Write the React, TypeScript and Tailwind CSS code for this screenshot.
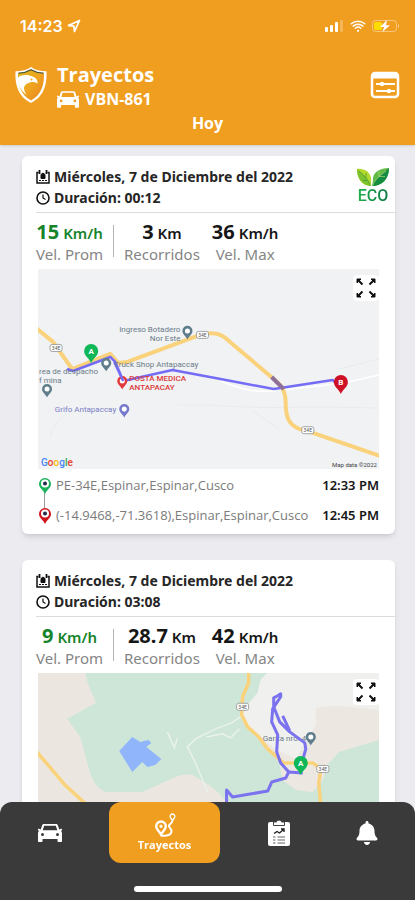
import type { ReactNode } from "react";
import { IoWifi } from "react-icons/io5";
import { FaBell } from "react-icons/fa";

function CarIcon({ className }: { className: string }) {
  return (
    <svg viewBox="0 0 24 18" className={className} fill="currentColor" aria-hidden="true">
      <path
        fillRule="evenodd"
        d="M6 0h12c1 0 1.500.4 1.800 1.200L21.300 5.600 23 4.800c.8-.2 1 .3 1 .9s-.4 1-1.300 1.100c.9.8 1.300 1.500 1.300 2.700V17c0 .6-.4 1-1 1h-2.500c-.6 0-1-.4-1-1v-2h-15v2c0 .6-.4 1-1 1H1c-.6 0-1-.4-1-1V9.500C0 8.300.4 7.600 1.300 6.800.4 6.700 0 6.300 0 5.700s.2-1.100 1-.9l1.700.8L4.200 1.200C4.500.4 5 0 6 0Zm.2 1.700L4.700 6.300h14.600l-1.500-4.600ZM4.500 9a1.500 1.500 0 1 0 0 3 1.500 1.500 0 0 0 0-3Zm15 0a1.500 1.500 0 1 0 0 3 1.500 1.500 0 0 0 0-3Z"
      />
    </svg>
  );
}

function Shield() {
  return (
    <svg viewBox="0 0 34 38" className="-mt-1 h-[38px] w-[34px] shrink-0" aria-hidden="true">
      <defs>
        <linearGradient id="shield" x1="0" y1="0" x2="1" y2="1">
          <stop offset="0" stopColor="#d9b51c" />
          <stop offset="0.5" stopColor="#f0a51f" />
          <stop offset="1" stopColor="#e8821e" />
        </linearGradient>
      </defs>
      <path d="M17 1c4 3 9 4 15.500 4.300C33 17 31 30 17 37 3 30 1 17 1.500 5.300 8 5 13 4 17 1Z" fill="#fff" />
      <path d="M17 3.500c4 2.500 8 3.400 13 3.800C30.300 18 28 28.500 17 34.500 6 28.500 3.700 18 4 7.300c5-.4 9-1.300 13-3.800Z" fill="url(#shield)" />
      <path d="M4.500 7.200C9 7 13 6 17 3.700c4 2.300 8 3.300 12.500 3.500" fill="none" stroke="#4a5236" strokeWidth="1.200" />
      <path d="M3.500 12c2-2.500 7-3.500 12-2.500 4.500.8 8.500 3.500 8 8-2-1.700-4.500-2-7-1.200-3.500 1-6.500 3-6.500 6 0 2 1 4 2.500 6.500C7 25 4 19 3.500 12Z" fill="#fff" />
      <circle cx="17.500" cy="13.500" r="1" fill="#f0a11f" />
    </svg>
  );
}

function StatusBar() {
  return (
    <div className="flex h-4 items-center justify-between pl-5 pr-[15px]">
      <div className="flex items-center gap-1 font-['Inter','Liberation_Sans',sans-serif] text-base font-semibold leading-4">
        <span>14:23</span>
        <svg viewBox="0 0 14 14" className="h-[14px] w-[14px]" fill="none" stroke="currentColor" strokeWidth="1.800" strokeLinejoin="round" aria-hidden="true">
          <path d="M12.500 1.500 1.500 6.500l5.400.6.600 5.400Z" />
        </svg>
      </div>
      <div className="flex items-center gap-[5px]">
        <svg viewBox="0 0 19 12" className="h-3 w-[19px]" fill="currentColor" aria-hidden="true">
          <rect x="0" y="7" width="3" height="5" rx="1" />
          <rect x="5" y="5" width="3" height="7" rx="1" />
          <rect x="10" y="2" width="3" height="10" rx="1" />
          <rect x="15" y="0" width="3" height="12" rx="1" opacity="0.250" />
        </svg>
        <IoWifi className="h-[18px] w-[18px]" aria-hidden="true" />
        <svg viewBox="0 0 28 14" className="h-[14px] w-7" aria-hidden="true">
          <rect x="0.500" y="1.500" width="24" height="11" rx="3" fill="none" stroke="#fff" strokeOpacity="0.400" />
          <rect x="2" y="3" width="8" height="8" rx="1.500" fill="#ffdc00" />
          <path d="M26 5c1.500.5 1.500 3.500 0 4Z" fill="#fff" opacity="0.500" />
          <path d="M15 1 8 8h4l-1.500 5L18 6.200h-4Z" fill="#fff" />
        </svg>
      </div>
    </div>
  );
}

function Header() {
  return (
    <header className="relative z-10 bg-[#f09e20] pb-2.5 pt-[18px] text-white shadow-sm">
      <StatusBar />
      <div className="mt-[29px] flex items-center pl-3.5 pr-[15px]">
        <Shield />
        <div className="ml-[9px] flex-1">
          <h1 className="text-xl font-bold leading-6">Trayectos</h1>
          <div className="flex items-center gap-1.5 text-base font-bold leading-6">
            <CarIcon className="h-[17px] w-[22px]" />
            <span>VBN-861</span>
          </div>
        </div>
        <button aria-label="Filtros" className="-mt-1 text-white">
          <svg viewBox="0 0 30 28" className="h-7 w-[30px]" fill="none" stroke="currentColor" aria-hidden="true">
            <rect x="2" y="2" width="26" height="24" rx="3" strokeWidth="2.500" />
            <path d="M2 5h26" strokeWidth="5" />
            <path d="M6 13h19M6 20h19" strokeWidth="1.800" />
            <circle cx="12" cy="13" r="2.200" fill="currentColor" stroke="none" />
            <circle cx="19" cy="20" r="2.200" fill="currentColor" stroke="none" />
          </svg>
        </button>
      </div>
      <p className="text-center text-base font-bold leading-6">Hoy</p>
    </header>
  );
}

function CalendarIcon() {
  return (
    <svg viewBox="0 0 14 14" className="h-[14px] w-[14px]" fill="none" stroke="#111" aria-hidden="true">
      <path d="M2.500 2.500H1V13h12V2.500h-1.500" strokeWidth="1.500" />
      <path d="M3.500 0v4M10.500 0v4" strokeWidth="1.800" />
      <path d="M5 4.500 7 3l2 1.500v4H5Z" fill="#111" strokeWidth="1" />
      <path d="M3 10.500h8" strokeWidth="1.200" strokeDasharray="2 1" />
    </svg>
  );
}

function ClockIcon() {
  return (
    <svg viewBox="0 0 14 14" className="h-[14px] w-[14px]" fill="none" stroke="#111" aria-hidden="true">
      <circle cx="7" cy="7" r="6" strokeWidth="1.600" />
      <path d="M7 3.500V7l2.500 1.500" strokeWidth="1.200" />
    </svg>
  );
}

function EcoBadge() {
  return (
    <div className="flex flex-col items-center gap-px pt-0.5">
      <svg viewBox="0 0 32 19" className="h-[19px] w-8" aria-hidden="true">
        <path d="M0 1c7-1 13 3 14 9 .4 3 0 6-.4 8C6 18 0 12 0 1Z" fill="#b2d92c" />
        <path d="M0 1c0 9 5 16 13.600 17C12 11 6 6 0 1Z" fill="#7fc22f" />
        <path d="M32 0C23 0 16 4 16 11c0 3-.7 5-1 7C25 18 32 11 32 0Z" fill="#63bb47" />
        <path d="M32 0C27 5 19 9 15 18c10 0 17-7 17-18Z" fill="#168c43" />
        <path d="M2 3c4 4 9 8 11.600 15M9 5v5M6 12.500h4" fill="none" stroke="#3f9a2f" strokeWidth="0.700" />
        <path d="M29 3c-5 4-11 8-13.500 15M22 3.500V8.500h6" fill="none" stroke="#c4e27a" strokeWidth="0.600" />
      </svg>
      <span className="bg-gradient-to-r from-[#1fae4b] to-[#0b7a45] bg-clip-text font-['Roboto',sans-serif] text-base font-medium leading-4 text-transparent">ECO</span>
    </div>
  );
}

function MapPin({ x, y, color, r = 5, label }: { x: number; y: number; color: string; r?: number; label?: string }) {
  return (
    <g transform={`translate(${x} ${y})`}>
      <path
        d={`M${-r} 0a${r} ${r} 0 1 1 ${2 * r} 0C${r} ${r * 0.7} ${r * 0.3} ${r} 0 ${r * 1.7}C${-r * 0.3} ${r} ${-r} ${r * 0.7} ${-r} 0Z`}
        fill={color}
      />
      {label ? (
        <text y="3" textAnchor="middle" fontSize="8" fontWeight="700" fill="#fff">{label}</text>
      ) : (
        <circle r={r * 0.5} fill="#fff" />
      )}
    </g>
  );
}

function RoadSign({ x, y }: { x: number; y: number }) {
  return (
    <g transform={`translate(${x} ${y})`}>
      <rect x="-6" y="-3.500" width="12" height="7" rx="2" fill="#fff" stroke="#8d9093" strokeWidth="0.800" />
      <text y="2" textAnchor="middle" fontSize="5" fill="#555">34E</text>
    </g>
  );
}

const mapClass = "block h-[200px] w-full font-['Roboto',sans-serif]";

function MapAntapaccay() {
  return (
    <svg viewBox="0 0 340 200" preserveAspectRatio="xMidYMid slice" className={mapClass} role="img" aria-label="Mapa del trayecto">
      <rect x="-200" width="740" height="200" fill="#f0f2f4" />
      <g fill="none" stroke="#fff" strokeWidth="1.500">
        <path d="M182 112c20 8 35 12 55 10M245 121l60-7 35-8" />
        <path d="M12 168c4-14 10-20 20-25M140 136h30c60 5 110 0 170 3M215 142l25 18M300 100l40-10" stroke="#e9ebed" strokeWidth="1" />
      </g>
      <g fill="none" strokeLinejoin="round">
        <path
          d="M-2 59 15 73l19 27 38-15 8 9 9-1 70-26c7-3 18-4 25 0 5 3 8 7 11 9l40 34c8 6 12 12 12 25 0 14 4 21 14 25l8 2 73 25"
          stroke="#fad27b"
          strokeWidth="4"
        />
        <path d="m29 100 6 2 37-14 5 5 8 19 49-11 48 9 53 10 59-9 8 8" stroke="#756cf5" strokeWidth="2.500" />
        <path d="m233 108 12 12" stroke="#8d719b" strokeWidth="4" />
      </g>
      <RoadSign x={18} y={79} />
      <RoadSign x={164} y={66} />
      <RoadSign x={269} y={161} />
      <MapPin x={149} y={62} color="#607d8b" />
      <MapPin x={68} y={94} color="#607d8b" />
      <MapPin x={9} y={120} color="#607d8b" />
      <MapPin x={86} y={140} color="#7579ca" />
      <MapPin x={84} y={112} color="#e33b3b" />
      <path d="m76 93 9 19" stroke="#756cf5" strokeWidth="2.500" />
      <g fontSize="8" fill="#6b7b87">
        <text x="142" y="63" textAnchor="end">Ingreso Botadero</text>
        <text x="142" y="72" textAnchor="end">Nor Este</text>
        <text x="76" y="98">Truck Shop Antapaccay</text>
        <text x="1" y="105">rea de despacho</text>
        <text x="1" y="114">f mina</text>
        <text x="78" y="143" textAnchor="end" fill="#7b80c4">Grifo Antapaccay</text>
        <g fill="#dd3b3b" fontWeight="500">
          <text x="91" y="112">POSTA MEDICA</text>
          <text x="91" y="121">ANTAPACAY</text>
        </g>
      </g>
      <MapPin x={53} y={82} r={7} color="#10b759" label="A" />
      <MapPin x={302} y={113} r={7} color="#ce1126" label="B" />
      <text x="3" y="197" fontSize="10" fontWeight="500" fill="#4285f4">
        G<tspan fill="#ea4335">o</tspan><tspan fill="#fbbc05">o</tspan>g<tspan fill="#34a853">l</tspan><tspan fill="#ea4335">e</tspan>
      </text>
      <text x="338" y="198" textAnchor="end" fontSize="6" fill="#444">Map data ©2022</text>
    </svg>
  );
}

function MapMine() {
  return (
    <svg viewBox="0 0 340 200" preserveAspectRatio="xMidYMid slice" className={mapClass} role="img" aria-label="Mapa del trayecto">
      <rect x="-200" width="740" height="200" fill="#cee6d8" />
      <path d="M-200 0H47l3 12 8 18-29 16 13 18 10 36q4 14 15 19h37l33-15q9-4 17-2l18 11q8 6 14 14l10 20v53H-200Z" fill="#ebe7e0" />
      <path d="M229 0 222 7l-3 13-15 18 1 12 15 14 20 23 4 20 13 10 17 2 10-12 6-17 10-11 40-12h200V0Z" fill="#ece8e1" />
      <path d="M229 0 222 7l-3 13-15 18 1 12 29 24 23 12 20-34v-17l20-2 43 4h200V0Z" fill="#f0f0ee" />
      <path d="m81 78 13-14 8 5 8-2 3 3-5 4 15 12-6 6-8 2-5-5-10 10Z" fill="#90b5fb" />
      <path d="m205 42-12 8-16 6-20 10-8 8 8 16 12 29M129 59l7 16 3-10M168 64l16-3 8 4 9-9" fill="none" stroke="#e9f2ec" strokeWidth="1.500" />
      <g fill="none" stroke="#fad27b" strokeWidth="3.500" strokeLinejoin="round">
        <path d="m-2 78 29 34 24 22" />
        <path d="M210-2v12l-6 14-1 18 6 12 11 10 9 12 16 14h29l8 6-2 14 2 24" />
      </g>
      <RoadSign x={204} y={34} />
      <RoadSign x={284} y={96} />
      <text x="224" y="68" fontSize="8" fill="#6b7b87">Garita nro. 4</text>
      <g fill="none" stroke="#7a72ee" strokeWidth="3" strokeLinejoin="round">
        <path d="M188 135v-18l6 7 35-6 4-9 14-4 3-6 14 1" />
        <path d="m250 99-8-9-4-11 1-17-6-13 1-13 8-12v-3l-3 2-4 2v9l6 15 10 10 15 11 1 6-3 11M244 43l7 15" />
      </g>
      <MapPin x={272} y={64} color="#607d8b" />
      <MapPin x={262} y={90} r={7} color="#10b759" label="A" />
    </svg>
  );
}

function ExpandButton() {
  return (
    <button aria-label="Ampliar mapa" className="absolute right-0 top-1.5 rounded-sm bg-white p-0.5">
      <svg viewBox="0 0 22 22" className="h-[22px] w-[22px]" aria-hidden="true">
        <g fill="#111" stroke="#111" strokeWidth="2">
          <path d="M2 2h4L2 6ZM20 2h-4l4 4ZM2 20h4l-4-4ZM20 20h-4l4-4Z" strokeWidth="1" />
          <path d="m3 3 4.500 4.500M19 3l-4.500 4.500M3 19l4.500-4.500M19 19l-4.500-4.500" />
        </g>
      </svg>
    </button>
  );
}

function Stat({ value, unit, label, green = false }: { value: string; unit: string; label: string; green?: boolean }) {
  return (
    <div>
      <div className={green ? "flex items-baseline justify-center gap-1 text-[#16842b]" : "flex items-baseline justify-center gap-1 text-[#161616]"}>
        <span className="text-xl font-bold leading-[26px]">{value}</span>
        <span className="text-[15px] font-semibold leading-5">{unit}</span>
      </div>
      <div className="text-center text-[15px] leading-[18px] text-[#858585]">{label}</div>
    </div>
  );
}

function StopPin({ color }: { color: string }) {
  return (
    <svg viewBox="0 0 14 18" className="relative h-[18px] w-[14px] shrink-0" aria-hidden="true">
      <path d="M7 1a6 6 0 0 0-6 6c0 4 4 5.500 6 10 2-4.500 6-6 6-10a6 6 0 0 0-6-6Z" fill={color} />
      <circle cx="7" cy="6.500" r="4" fill="#fff" />
      <circle cx="7" cy="6.500" r="2" fill="#222c44" />
    </svg>
  );
}

function Stop({ color, place, time }: { color: string; place: string; time: string }) {
  return (
    <li className="flex h-[30px] items-center text-[13px]">
      <StopPin color={color} />
      <span className="ml-1 flex-1 whitespace-nowrap font-['Open_Sans','Noto_Sans',sans-serif] text-[#7b7b7b]">{place}</span>
      <time className="whitespace-nowrap font-semibold text-[#161616]">{time}</time>
    </li>
  );
}

interface TripProps {
  duration: string;
  avg: string;
  distance: string;
  max: string;
  eco?: boolean;
  map: ReactNode;
  children?: ReactNode;
}

function TripCard({ duration, avg, distance, max, eco, map, children }: TripProps) {
  return (
    <article className="rounded-md bg-white pb-[3px] font-['Noto_Sans','Open_Sans',sans-serif] shadow-md">
      <div className="ml-3.5 flex justify-between border-b border-[#dcdcdc] pb-1 pr-1.5 pt-2.5">
        <div className="text-sm font-bold leading-[21px] text-[#262626]">
          <h2 className="flex items-center gap-1"><CalendarIcon />Miércoles, 7 de Diciembre del 2022</h2>
          <p className="flex items-center gap-1"><ClockIcon />Duración: {duration}</p>
        </div>
        {eco && <EcoBadge />}
      </div>
      <div className="flex items-center pb-1.5 pl-3.5 pt-1.5">
        <Stat value={avg} unit="Km/h" label="Vel. Prom" green />
        <div className="mx-2.5 h-8 w-px bg-[#b5b5b5]" />
        <Stat value={distance} unit="Km" label="Recorridos" />
        <div className="ml-3">
          <Stat value={max} unit="Km/h" label="Vel. Max" />
        </div>
      </div>
      <div className="relative mx-4 overflow-hidden">
        {map}
        <ExpandButton />
      </div>
      {children}
    </article>
  );
}

function RouteIcon() {
  return (
    <svg viewBox="0 0 22 24" className="h-6 w-[22px]" fill="none" stroke="currentColor" aria-hidden="true">
      <path d="M7 8.500a4.800 4.800 0 0 0-4.800 4.800c0 3.200 2.800 4.500 4.800 8.200 2-3.700 4.800-5 4.800-8.200A4.800 4.800 0 0 0 7 8.500Z" strokeWidth="2.400" />
      <circle cx="7" cy="13.300" r="1.200" fill="currentColor" strokeWidth="1" />
      <path d="M7 22.500c7 .8 10.500-1 10.500-4.500 0-2.500-3-3.500-2.500-5.500.4-1.500 2.500-1.800 3.500-4.500" strokeWidth="2" />
      <path d="M18.500 1a2.400 2.400 0 0 0-2.400 2.400c0 1.700 1.400 2.200 2.400 4.200 1-2 2.400-2.500 2.400-4.200A2.400 2.400 0 0 0 18.500 1Z" strokeWidth="1.300" />
    </svg>
  );
}

function ReportIcon() {
  return (
    <svg viewBox="0 0 22 26" className="h-[26px] w-[22px]" aria-hidden="true">
      <rect x="0" y="2" width="22" height="24" rx="2" fill="#fff" />
      <path d="M5.500 2h3c0-2.500 5-2.500 5 0h3v3.500h-11Z" fill="#fff" stroke="#444" strokeWidth="1" />
      <path d="m6 13.500 3-2 2.500 1.500 4-3.500M13 9h3v3" fill="none" stroke="#222" strokeWidth="1.400" />
      <path d="M5 17h2.500M9.500 17H17M5 20h2.500M9.500 20H17M5 23h2.500M9.500 23H17" stroke="#666" strokeWidth="1.200" />
    </svg>
  );
}

function TabBar() {
  return (
    <nav className="fixed inset-x-0 bottom-0 z-20 rounded-t-xl bg-[#3a3a3a] text-white">
      <div className="grid h-[61px] grid-cols-[109fr_111fr_117fr_78fr]">
        <button aria-label="Vehículos" className="flex items-center justify-center pr-2.5">
          <CarIcon className="h-[18px] w-6" />
        </button>
        <button aria-current="page" className="flex flex-col items-center justify-center rounded-xl bg-[#f09e20] text-[11px] font-bold leading-4">
          <RouteIcon />
          Trayectos
        </button>
        <button aria-label="Reportes" className="flex items-center justify-center">
          <ReportIcon />
        </button>
        <button aria-label="Notificaciones" className="flex items-center justify-start pl-[19px]">
          <FaBell className="h-6 w-[22px]" />
        </button>
      </div>
      <div className="mx-auto mb-2 mt-[23px] h-1.5 w-[148px] rounded-full bg-white" />
    </nav>
  );
}

export default function App() {
  return (
    <div className="flex h-screen flex-col overflow-hidden bg-[#ecebf0] font-['Open_Sans','Noto_Sans',sans-serif]">
      <Header />
      <main className="flex min-h-0 flex-1 flex-col gap-[26px] overflow-hidden pl-[22px] pr-5 pt-[11px]">
        <TripCard duration="00:12" avg="15" distance="3" max="36" eco map={<MapAntapaccay />}>
          <ul className="relative mx-4 pt-0.5">
            <li aria-hidden="true" className="absolute left-1.5 top-5 h-5 w-px bg-[#9a9a9a]" />
            <Stop color="#18b35a" place="PE-34E,Espinar,Espinar,Cusco" time="12:33 PM" />
            <Stop color="#d0121b" place="(-14.9468,-71.3618),Espinar,Espinar,Cusco" time="12:45 PM" />
          </ul>
        </TripCard>
        <TripCard duration="03:08" avg="9" distance="28.7" max="42" map={<MapMine />} />
      </main>
      <TabBar />
    </div>
  );
}
